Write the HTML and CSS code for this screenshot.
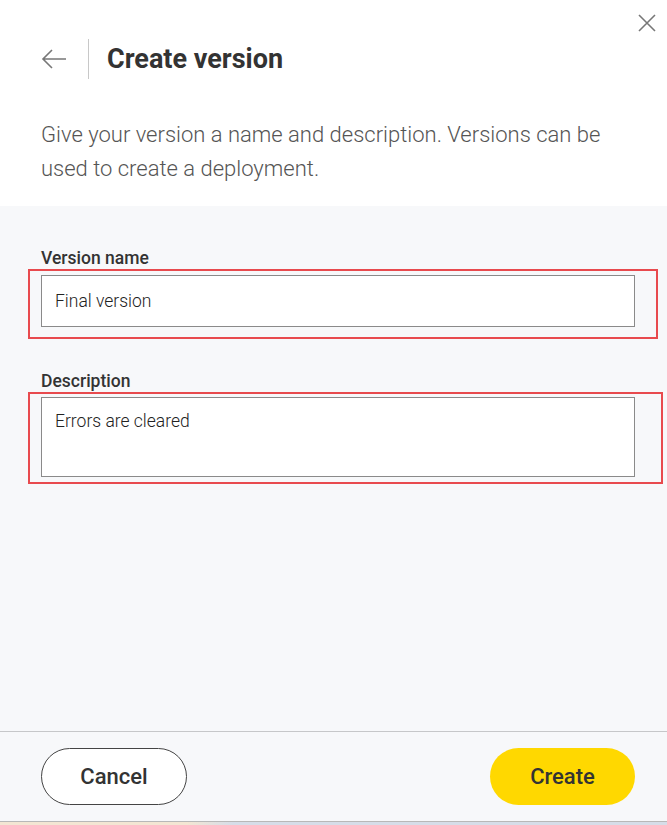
FILE: index.html
```html
<!DOCTYPE html>
<html lang="en">
<head>
<meta charset="utf-8">
<title>Create version</title>
<link rel="stylesheet" href="styles.css">
</head>
<body>
<div class="dialog">
  <header class="head">
    <button class="close" aria-label="Close">
      <svg width="18" height="18" viewBox="0 0 18 18"><path d="M1 1L17 17M17 1L1 17" stroke="#777" stroke-width="1.6" fill="none"/></svg>
    </button>
    <div class="title-row">
      <button class="back" aria-label="Back">
        <svg width="26" height="20" viewBox="0 0 26 20"><path d="M25 10H2M11 1L2 10L11 19" stroke="#777" stroke-width="1.6" fill="none"/></svg>
      </button>
      <span class="divider"></span>
      <h1 class="title">Create version</h1>
    </div>
    <p class="intro">Give your version a name and description. Versions can be used to create a deployment.</p>
  </header>
  <main class="body">
    <label class="label">Version name</label>
    <div class="mark mark-1">
      <div class="input">Final version</div>
    </div>
    <label class="label label-2">Description</label>
    <div class="mark mark-2">
      <div class="input textarea">Errors are cleared</div>
    </div>
  </main>
  <footer class="foot">
    <button class="btn btn-cancel">Cancel</button>
    <button class="btn btn-create">Create</button>
  </footer>
</div>
<div class="strip"></div>
</body>
</html>
```
FILE: styles.css
```css
* { box-sizing: border-box; }
html, body { margin: 0; padding: 0; }
body {
  width: 667px;
  height: 825px;
  overflow: hidden;
  font-family: Roboto, "Liberation Sans", sans-serif;
  color: #333;
  background: #f7f8fa;
}
.dialog {
  height: 821px;
  display: flex;
  flex-direction: column;
  background: #f7f8fa;
}
.head {
  position: relative;
  background: #fff;
  padding: 39px 41px 20px 41px;
}
.close {
  position: absolute;
  top: 14px;
  right: 11px;
  border: 0;
  background: none;
  padding: 0;
  width: 18px;
  height: 18px;
  display: flex;
}
.title-row {
  display: flex;
  align-items: center;
  height: 40px;
}
.back {
  border: 0;
  background: none;
  padding: 0;
  display: flex;
  width: 26px;
  height: 20px;
}
.divider {
  width: 1px;
  height: 40px;
  background: #c8c8c8;
  margin-left: 21px;
  margin-right: 18px;
}
.title {
  margin: 0;
  font-size: 27px;
  font-weight: 700;
  color: #333;
}
.intro {
  margin: 39px 0 0 0;
  max-width: 570px;
  font-size: 22px;
  font-weight: 300;
  line-height: 34px;
  color: #555;
}
.body {
  flex: 1;
  padding: 42px 0 0 28px;
  display: flex;
  flex-direction: column;
}
.label {
  display: block;
  margin-left: 13px;
  font-size: 17.5px;
  line-height: 21px;
  font-weight: 500;
  color: #333;
  height: 21px;
}
.label-2 { margin-top: 32px; }
.mark {
  border: 2px solid #e84a4e;
}
.mark-1 {
  width: 630px;
  height: 70px;
  padding: 4px 21px 0 11px;
}
.mark-2 {
  width: 635px;
  height: 92px;
  padding: 3px 26px 0 11px;
}
.input {
  height: 52px;
  background: #fff;
  border: 1.5px solid #8a8a8a;
  padding: 0 13px;
  display: flex;
  align-items: center;
  font-size: 17.5px;
  font-weight: 300;
  color: #222;
}
.textarea {
  height: 80px;
  align-items: flex-start;
  padding-top: 13px;
}
.foot {
  border-top: 1px solid #c6c7c9;
  padding: 16px 32px 16px 41px;
  display: flex;
  justify-content: space-between;
  align-items: flex-start;
  height: 90px;
}
.btn {
  height: 57px;
  width: 146px;
  border-radius: 29px;
  font-family: Roboto, "Liberation Sans", sans-serif;
  font-size: 22px;
  font-weight: 500;
  color: #333;
}
.btn-cancel {
  background: #fff;
  border: 1px solid #444;
}
.btn-create {
  width: 145px;
  background: #ffd800;
  border: 0;
}
.strip {
  height: 4px;
  border-top: 1px solid #b8b8b8;
  background: linear-gradient(to right, #f3e6d3 0%, #f3e6d3 28%, #d6dde8 35%, #d6dde8 100%);
}
```
